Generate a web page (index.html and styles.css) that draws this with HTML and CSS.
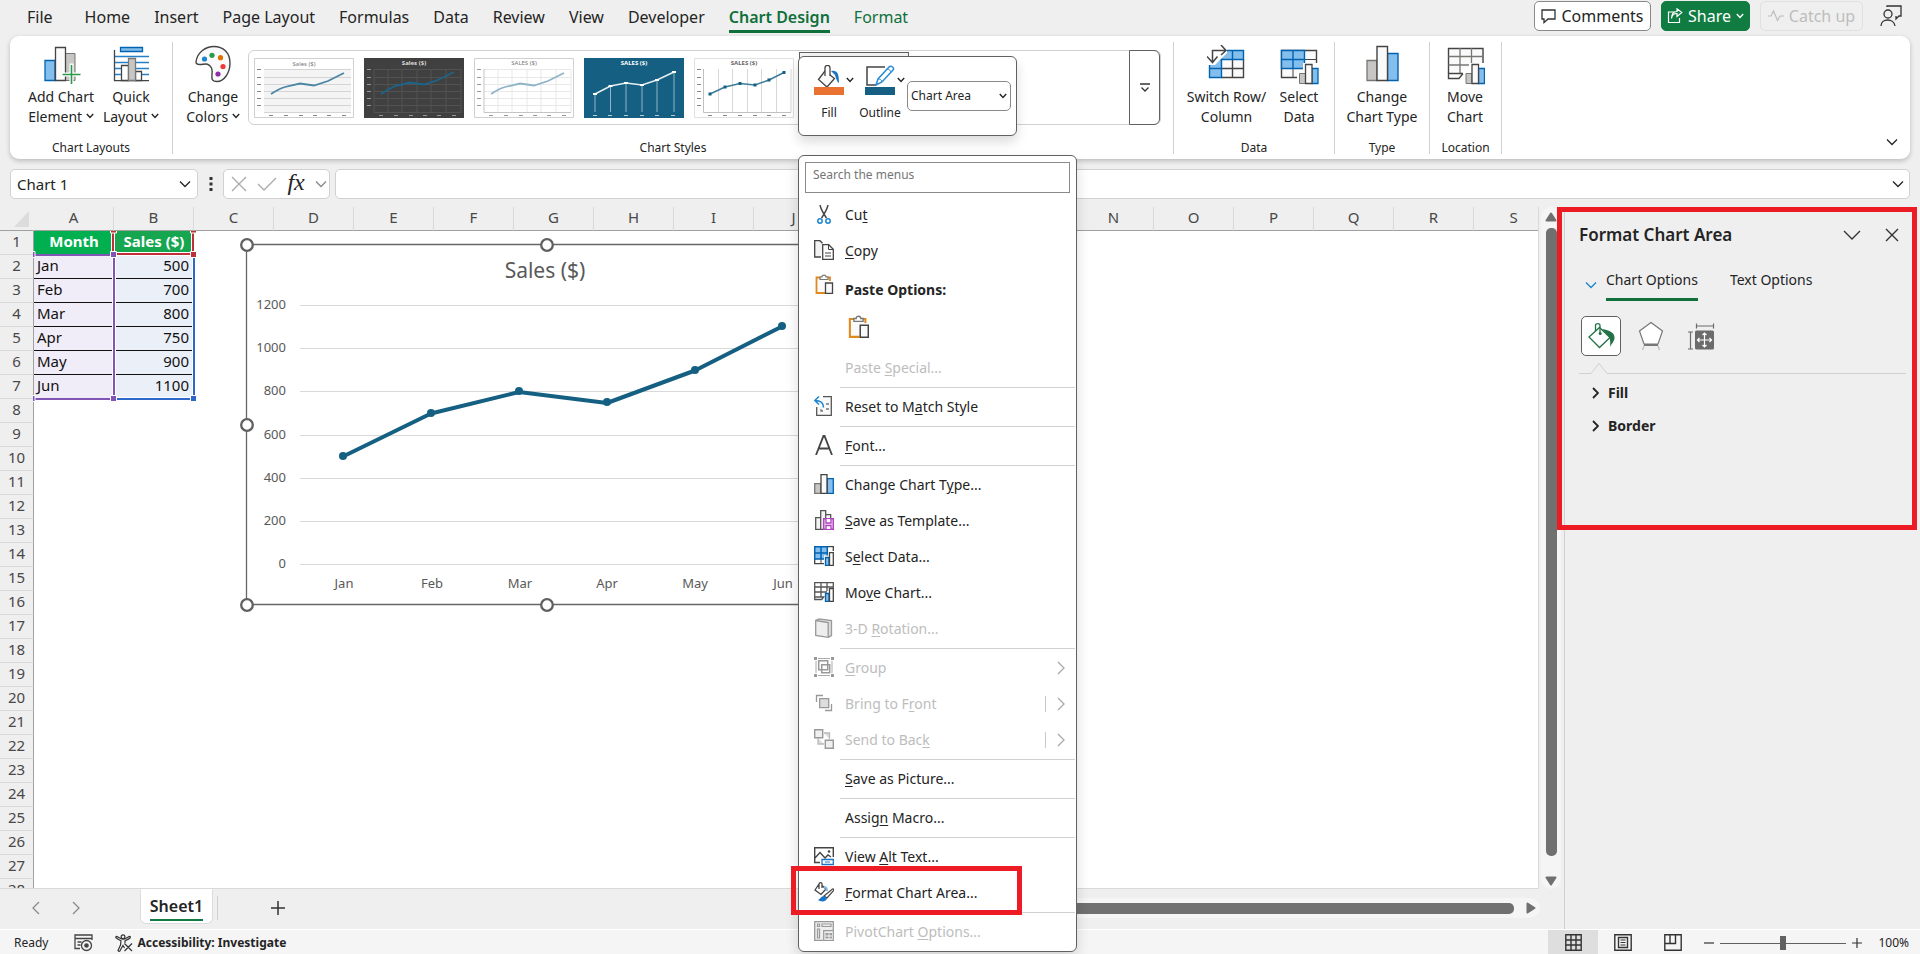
FILE: index.html
```html
<!DOCTYPE html>
<html lang="en">
<head>
<meta charset="utf-8">
<title>Chart Design</title>
<link rel="stylesheet" href="styles.css">
</head>
<body>
<svg class="defs" aria-hidden="true">
  <symbol id="down" viewBox="0 0 12 8"><path d="M1 1.5 6 6.5 11 1.5" fill="none" stroke="currentColor" stroke-width="1.3"/></symbol>
  <symbol id="caret" viewBox="0 0 8 6"><path d="M.8 1 4 4.4 7.2 1" fill="none" stroke="currentColor" stroke-width="1.4"/></symbol>
  <symbol id="right" viewBox="0 0 8 14"><path d="M1 1 7 7 1 13" fill="none" stroke="currentColor" stroke-width="1.3"/></symbol>
  <symbol id="expand" viewBox="0 0 7 12"><path d="M1 1 6 6 1 11" fill="none" stroke="currentColor" stroke-width="1.8"/></symbol>
  <symbol id="left" viewBox="0 0 8 14"><path d="M7 1 1 7 7 13" fill="none" stroke="currentColor" stroke-width="1.3"/></symbol>
  <symbol id="clip" viewBox="0 0 20 20"><path d="M11 19H2.500V3.500H16V7" fill="#fafafa" stroke="#e08a1e" stroke-width="1.8"/><path d="M6 5.500V3h2c0-2.600 4-2.600 4 0h2v2.500Z" fill="#fff" stroke="#777" stroke-width="1.2"/><path d="M11.500 9h7v10.300h-7Z" fill="#fafafa" stroke="#444" stroke-width="1.300"/></symbol>
  <symbol id="minibars" viewBox="0 0 20 20"><path d="M.7 9.700h6v9.600h-6Z" fill="#c8c6c4" stroke="#797774" stroke-width="1.300"/><path d="M13.300 4.700h6v14.600h-6Z" fill="#83beec" stroke="#0063b1" stroke-width="1.300"/><path d="M7 .7h6v18.600H7Z" fill="#fafafa" stroke="#444" stroke-width="1.300"/></symbol>
</svg>

<header class="tabs-bar">
  <nav class="tabs" aria-label="Ribbon tabs">
    <button class="tab tab-file">File</button><button class="tab">Home</button><button class="tab">Insert</button><button class="tab">Page Layout</button><button class="tab">Formulas</button><button class="tab">Data</button><button class="tab">Review</button><button class="tab">View</button><button class="tab">Developer</button><button class="tab active">Chart Design</button><button class="tab contextual">Format</button>
  </nav>
  <div class="top-actions">
    <button class="action comments"><svg width="15" height="16" viewBox="0 0 15 16"><path d="M1 2h13v9H7l-4 3.500V11H1Z" fill="none" stroke="#333" stroke-width="1.300"/></svg>Comments</button>
    <button class="action share"><svg width="16" height="16" viewBox="0 0 16 16"><path d="M7 4H1.500v10.500h11V10M4.500 10.500C5 6.500 7.500 5.500 10 5.500V8.500L14.800 4.500 10 .8V3.500C6.500 3.700 4.500 6 4.500 10.500Z" fill="none" stroke="#fff" stroke-width="1.200"/></svg>Share<svg class="caret" width="8" height="6"><use href="#caret"/></svg></button>
    <button class="action catch" disabled><svg width="16" height="14" viewBox="0 0 16 14"><path d="M0 7h3l2.500-5 4 9.500L12 7h4" fill="none" stroke="currentColor" stroke-width="1.200"/></svg>Catch up</button>
    <button class="person" aria-label="Account"><svg width="22" height="22" viewBox="0 0 22 22"><path d="M7 2V1h14v10h-2l-3 3v-3" fill="none" stroke="#333" stroke-width="1.300"/><circle cx="8" cy="9" r="4" fill="none" stroke="#333" stroke-width="1.300"/><path d="M1 21c0-8 13-8 14 0" fill="none" stroke="#333" stroke-width="1.300"/></svg></button>
  </div>
</header>

<section class="ribbon" aria-label="Chart Design">
  <div class="group g-layouts">
    <div class="group-body">
      <button class="big"><svg width="40" height="40" viewBox="0 0 40 40"><path d="M4 15.500h10v20H4Z" fill="#83beec" stroke="#0063b1" stroke-width="1.300"/><path d="M24.500 8.500H34v27h-9.500Z" fill="#c8c6c4" stroke="#797774"/><path d="M14.500 2.500h10v33h-10Z" fill="#fafafa" stroke="#444" stroke-width="1.300"/><path d="M30.500 18.500v21M20 29.500h21" stroke="#fff" stroke-width="4"/><path d="M30.500 20v19M21.500 29.500h18" stroke="#2b9a48" stroke-width="1.600"/></svg><span>Add Chart<br>Element <svg class="caret" width="8" height="6"><use href="#caret"/></svg></span></button>
      <button class="big"><svg width="40" height="40" viewBox="0 0 40 40"><path d="M9.500 2.500h22v4h-22Z" fill="#83beec" stroke="#0063b1" stroke-width="1.300"/><path d="M4 11.500h34M4 17.500h34M4 23.500h34M4 29.500h34" stroke="#2580c8" stroke-width="1.500"/><path d="M3.500 5v31M3 35.700h35" stroke="#444" stroke-width="1.300"/><path d="M10.500 20.500h7v15h-7ZM24.500 26.500h6v9h-6Z" fill="#fff" stroke="#444" stroke-width="1.300"/><path d="M17.500 13.500h7v22h-7Z" fill="#c8c6c4" stroke="#797774" stroke-width="1.300"/></svg><span>Quick<br>Layout <svg class="caret" width="8" height="6"><use href="#caret"/></svg></span></button>
    </div>
    <div class="group-label">Chart Layouts</div>
  </div>
  <div class="group g-styles">
    <div class="group-body">
      <button class="big"><svg width="40" height="40" viewBox="0 0 40 40"><path d="M3 17C4 7 13 1.500 21 1.500c9 0 16 6 16 16.500 0 10-6 18.500-13 18.500-9 0-3-8-5.500-13.500C15.500 16.500 10 20 7 19.500 4.500 19.500 3 18.500 3 17Z" fill="#fafafa" stroke="#444" stroke-width="1.400"/><circle cx="11.500" cy="14" r="2.600" fill="#1c86d1"/><circle cx="19" cy="10.300" r="2.600" fill="#2b9a48"/><circle cx="27.500" cy="12.700" r="2.600" fill="#e07000"/><circle cx="30" cy="21.500" r="2.600" fill="#f03a3a"/><circle cx="25" cy="29" r="2.600" fill="#8e2fa8"/></svg><span>Change<br>Colors <svg class="caret" width="8" height="6"><use href="#caret"/></svg></span></button>
      <div class="gallery">
        <button class="thumb" aria-label="Style 1"><svg viewBox="0 0 100 60"><path d="M.5.500h99v59H.5Z" fill="#fff" stroke="#d0d0d0"/><path d="M10 11h87v43H10Z" fill="#f4f4f4"/><path d="M10 11.500h87M10 19.500h87M10 26.500h87M10 33.500h87M10 40.500h87M10 47.500h87M10 54.500h87" stroke="#d4d4d4"/><path d="M17 36C20 34 27 30 31 29L46 25.500 60 27.500 74 23 90 15" fill="none" stroke="#4b86a4" stroke-width="1.800"/><text x="50" y="8" text-anchor="middle" fill="#777">Sales ($)</text><path d="M3 11.500h4M3 19.500h4M3 26.500h4M3 33.500h4M3 40.500h4M3 47.500h4M15 57.500h4M30 57.500h4M45 57.500h4M59 57.500h4M73 57.500h4M88 57.500h4" stroke="#888"/></svg></button>
        <button class="thumb" aria-label="Style 2"><svg viewBox="0 0 100 60"><path d="M0 0h100v60H0Z" fill="#404040"/><path d="M10 11.500h87M10 19.500h87M10 26.500h87M10 33.500h87M10 40.500h87M10 47.500h87M10 54.500h87M10 11v43M24 11v43M38 11v43M53 11v43M67 11v43M82 11v43M97 11v43" stroke="#525252"/><path d="M17 36C20 34 27 30 31 28L46 24.500 60 26.500 74 22 90 14" fill="none" stroke="#1b648a" stroke-width="1.800"/><text x="50" y="7" text-anchor="middle" fill="#ddd" class="strong">Sales ($)</text><path d="M3 11.500h4M3 19.500h4M3 26.500h4M3 33.500h4M3 40.500h4M3 47.500h4M15 57.500h4M30 57.500h4M45 57.500h4M59 57.500h4M73 57.500h4M88 57.500h4" stroke="#999"/></svg></button>
        <button class="thumb" aria-label="Style 3"><svg viewBox="0 0 100 60"><path d="M.5.500h99v59H.5Z" fill="#fff" stroke="#d0d0d0"/><path d="M10 11.500h87M10 19.500h87M10 26.500h87M10 33.500h87M10 40.500h87M10 47.500h87M24 11v43M38 11v43M53 11v43M67 11v43M82 11v43M97 11v43" stroke="#e8e8e8"/><path d="M10 11v43.500h87" fill="none" stroke="#c4c4c4"/><path d="M17 36C20 34 27 30 31 29L46 25.500 60 27.500 74 23 90 15" fill="none" stroke="#8fb4c6" stroke-width="1.800"/><text x="50" y="7" text-anchor="middle" fill="#777">SALES ($)</text><path d="M3 11.500h4M3 19.500h4M3 26.500h4M3 33.500h4M3 40.500h4M3 47.500h4M15 57.500h4M30 57.500h4M45 57.500h4M59 57.500h4M73 57.500h4M88 57.500h4" stroke="#999"/></svg></button>
        <button class="thumb" aria-label="Style 4"><svg viewBox="0 0 100 60"><path d="M0 0h100v60H0Z" fill="#156082"/><path d="M11 36v18M26.500 28v26M42 25v29M58 27v27M73 22v32M90 14v40" stroke="#8fb4c6"/><path d="M11 36 26.500 28 42 25 58 27 73 22 90 14" fill="none" stroke="#e4eef2" stroke-width="1.500"/><path d="M9 35h4v2H9ZM24.500 27h4v2h-4ZM40 24h4v2h-4ZM56 26h4v2h-4ZM71 21h4v2h-4ZM88 13h4v2h-4Z" fill="#fff"/><text x="50" y="7" text-anchor="middle" fill="#fff" class="strong">SALES ($)</text><path d="M9 57.500h4M24 57.500h4M40 57.500h4M56 57.500h4M71 57.500h4M87 57.500h4" stroke="#b5ced9"/></svg></button>
        <button class="thumb" aria-label="Style 5"><svg viewBox="0 0 100 60"><path d="M.5.500h99v59H.5Z" fill="#fff" stroke="#e0e0e0"/><path d="M24.500 11v43M38.500 11v43M53.500 11v43M67.500 11v43M82.500 11v43M97 11v43" stroke="#d8d8d8"/><path d="M9.500 11v43.500H97" fill="none" stroke="#c0c0c0"/><path d="M16 36 31 29 46 25.500 61 27 75 22 90 14.500" fill="none" stroke="#3c7c99" stroke-width="1.500"/><path d="M14.500 34.500h3v3h-3ZM29.500 27.500h3v3h-3ZM44.500 24h3v3h-3ZM59.500 25.500h3v3h-3ZM73.500 20.500h3v3h-3ZM88.500 13h3v3h-3Z" fill="#156082"/><text x="50" y="7" text-anchor="middle" fill="#666" class="strong">SALES ($)</text><path d="M3 11.500h4M3 19.500h4M3 26.500h4M3 33.500h4M3 40.500h4M3 47.500h4M14 57.500h4M29 57.500h4M44 57.500h4M59 57.500h4M73 57.500h4M88 57.500h4" stroke="#888"/></svg></button>
        <button class="thumb selected" aria-label="Style 6"></button>
        <button class="more" aria-label="More styles"><svg width="10" height="10" viewBox="0 0 10 10"><path d="M0 1h10M1.500 4.500 5 8l3.500-3.500" fill="none" stroke="#333" stroke-width="1.300"/></svg></button>
      </div>
    </div>
    <div class="group-label">Chart Styles</div>
  </div>
  <div class="group g-data">
    <div class="group-body">
      <button class="big wide"><svg width="40" height="40" viewBox="0 0 40 40"><path d="M14 5.500h23v9H14ZM2.500 14.500h12v18h-12Z" fill="#83beec"/><path d="M14.500 14.500h22v18h-22Z" fill="#fafafa"/><path d="M36.500 14.500v18H14.500M25.500 14.500v18M14.500 23.500h22" fill="none" stroke="#444" stroke-width="1.400"/><path d="M16 5.500h20.500v9H2.500v18h12V9M25.500 5.500v9M2.500 23.500h12" fill="none" stroke="#0063b1" stroke-width="1.400"/><path d="M0 -2h20v10L8 20H-2Z" fill="#fff"/><path d="M5.500 17V5.500H19M14 0l5 5.500L14 10M0 11.500l5.500 6 5-6" fill="none" stroke="#444" stroke-width="1.500"/></svg><span>Switch Row/<br>Column</span></button>
      <button class="big narrow"><svg width="40" height="40" viewBox="0 0 40 40"><path d="M2.500 5.500h35v27h-35Z" fill="#fafafa" stroke="#444" stroke-width="1.400"/><path d="M14 23v10M2 32.500h20M37.500 14.500h-12" stroke="#444"/><path d="M2.500 5.500h23v18h-23Z" fill="#83beec"/><path d="M2.500 5.500h23v18h-23ZM14 5.500v18M2.500 14.500h23" fill="none" stroke="#0063b1" stroke-width="1.400"/><path d="M18 26h6v-8h16v22H18Z" fill="#fff"/><path d="M20.500 28.500h6v10h-6Z" fill="#c8c6c4" stroke="#797774"/><path d="M33 23.500h6v15h-6Z" fill="#83beec" stroke="#0063b1" stroke-width="1.300"/><path d="M26.500 19.500H33v19h-6.500Z" fill="#fafafa" stroke="#444" stroke-width="1.300"/></svg><span>Select<br>Data</span></button>
    </div>
    <div class="group-label">Data</div>
  </div>
  <div class="group g-type">
    <div class="group-body">
      <button class="big wide"><svg width="40" height="40" viewBox="0 0 40 40"><path d="M5 15.500h10v20H5Z" fill="#c8c6c4" stroke="#797774" stroke-width="1.300"/><path d="M25.500 8.500H36v27H25.500Z" fill="#83beec" stroke="#0063b1" stroke-width="1.400"/><path d="M15 1.500h10.500v34H15Z" fill="#fafafa" stroke="#444" stroke-width="1.400"/></svg><span>Change<br>Chart Type</span></button>
    </div>
    <div class="group-label">Type</div>
  </div>
  <div class="group g-loc">
    <div class="group-body">
      <button class="big"><svg width="40" height="40" viewBox="0 0 40 40"><path d="M3.500 28V3.500H38V21" fill="#fafafa" stroke="#444" stroke-width="1.400"/><path d="M15 3v25M26.500 3v15M3.500 11.500H38M3.500 20H26" stroke="#797774" stroke-width="1.300"/><path d="M18 28.500H3.500v5H14l4-5" fill="none" stroke="#444" stroke-width="1.400"/><path d="M19 26h5v-8h16v22H19Z" fill="#fff"/><path d="M21 28.500h6v10h-6Z" fill="#c8c6c4" stroke="#797774"/><path d="M33.500 23.500h6v15h-6Z" fill="#83beec" stroke="#0063b1" stroke-width="1.300"/><path d="M27 19.500h6.500v19H27Z" fill="#fafafa" stroke="#444" stroke-width="1.300"/></svg><span>Move<br>Chart</span></button>
    </div>
    <div class="group-label">Location</div>
  </div>
  <div class="ribbon-end"><button aria-label="Ribbon options"><svg width="12" height="8"><use href="#down"/></svg></button></div>
</section>

<section class="formula-bar">
  <div class="name-box"><input aria-label="Name box" value="Chart 1"><button aria-label="Names"><svg width="12" height="8"><use href="#down"/></svg></button></div>
  <svg class="dots" width="4" height="16" viewBox="0 0 4 16"><path d="M.5 1h3v3h-3ZM.5 6.500h3v3h-3ZM.5 12h3v3h-3Z" fill="#333"/></svg>
  <div class="fx-box">
    <button aria-label="Cancel"><svg width="16" height="16" viewBox="0 0 16 16"><path d="m1 1 14 14M15 1 1 15" stroke="#aaa" stroke-width="1.300"/></svg></button>
    <button aria-label="Enter"><svg width="20" height="16" viewBox="0 0 20 16"><path d="m1 8 6 6L19 2" fill="none" stroke="#aaa" stroke-width="1.300"/></svg></button>
    <button class="fx" aria-label="Insert function">fx</button>
    <button aria-label="Functions"><svg width="12" height="8" class="dim"><use href="#down"/></svg></button>
  </div>
  <div class="formula"><input aria-label="Formula"><button aria-label="Expand"><svg width="12" height="8"><use href="#down"/></svg></button></div>
</section>

<main class="workspace">
  <div class="book">
    <div class="sheet-row">
      <div class="sheet">
        <table class="grid">
          <thead><tr><th class="corner"><svg width="15" height="16" viewBox="0 0 15 16"><path d="M15 0v16H0Z" fill="#dcdcdc"/></svg></th><th>A</th><th>B</th><th>C</th><th>D</th><th>E</th><th>F</th><th>G</th><th>H</th><th>I</th><th>J</th><th>K</th><th>L</th><th>M</th><th>N</th><th>O</th><th>P</th><th>Q</th><th>R</th><th>S</th></tr></thead>
          <tbody>
            <tr class="head"><th>1</th><td>Month</td><td>Sales ($)</td></tr>
            <tr class="data"><th>2</th><td>Jan</td><td>500</td></tr>
            <tr class="data"><th>3</th><td>Feb</td><td>700</td></tr>
            <tr class="data"><th>4</th><td>Mar</td><td>800</td></tr>
            <tr class="data"><th>5</th><td>Apr</td><td>750</td></tr>
            <tr class="data"><th>6</th><td>May</td><td>900</td></tr>
            <tr class="data last"><th>7</th><td>Jun</td><td>1100</td></tr>
            <tr><th>8</th></tr><tr><th>9</th></tr><tr><th>10</th></tr><tr><th>11</th></tr><tr><th>12</th></tr><tr><th>13</th></tr><tr><th>14</th></tr><tr><th>15</th></tr><tr><th>16</th></tr><tr><th>17</th></tr><tr><th>18</th></tr><tr><th>19</th></tr><tr><th>20</th></tr><tr><th>21</th></tr><tr><th>22</th></tr><tr><th>23</th></tr><tr><th>24</th></tr><tr><th>25</th></tr><tr><th>26</th></tr><tr><th>27</th></tr><tr><th>28</th></tr>
          </tbody>
        </table>
        <svg class="ranges" width="166" height="172" viewBox="0 0 166 172" aria-hidden="true">
          <path d="M80 1v22h80V1" fill="none" stroke="#fff" stroke-width="4"/>
          <path d="M80 1v22h80V1" fill="none" stroke="#c0303b" stroke-width="2"/>
          <path d="M0 24h80" stroke="#8055b5" stroke-width="2"/>
          <path d="M0 168h80" stroke="#8055b5" stroke-width="2"/>
          <path d="M81 168h80V26" fill="none" stroke="#fff" stroke-width="4"/><path d="M81 168h80V26" fill="none" stroke="#2f68c8" stroke-width="2"/>
          <path d="M81 24v144" stroke="#fff" stroke-width="4"/><path d="M81 24v144" stroke="#8055b5" stroke-width="2"/>
          <g stroke="#fff"><path d="M77.500-3h6v5h-6ZM157.500-3h6v5h-6ZM157.500 20.500h6v6h-6Z" fill="#c0303b"/><path d="M-4 20.500h6v6h-6ZM77.500 20.500h6v6h-6ZM-4 164.500h6v6h-6ZM77.500 164.500h6v6h-6Z" fill="#8055b5"/><path d="M157.500 164.500h6v6h-6Z" fill="#2f68c8"/></g>
        </svg>
        <svg class="chart" width="620" height="376" viewBox="0 0 620 376" role="img" aria-label="Sales ($) line chart">
          <path d="M8.500 8.500h602v360H8.500Z" fill="#fff" stroke="#666" stroke-width="1.300"/>
          <path d="M62 69.500h528M62 112.500h528M62 155.500h528M62 199.500h528M62 242.500h528M62 285.500h528M62 328.500h528" stroke="#d9d9d9"/>
          <path d="m105 220.500 88-43 88-21.500 88 11 88-32.500 87-44" fill="none" stroke="#156082" stroke-width="4" stroke-linejoin="round"/>
          <g fill="#156082"><circle cx="105" cy="220" r="4"/><circle cx="193" cy="177" r="4"/><circle cx="281" cy="155" r="4"/><circle cx="369" cy="166" r="4"/><circle cx="457" cy="134" r="4"/><circle cx="544" cy="90" r="4"/></g>
          <text class="title" x="307" y="42" text-anchor="middle">Sales ($)</text>
          <g class="axis" text-anchor="end"><text x="48" y="73">1200</text><text x="48" y="116">1000</text><text x="48" y="159">800</text><text x="48" y="203">600</text><text x="48" y="246">400</text><text x="48" y="289">200</text><text x="48" y="332">0</text></g>
          <g class="axis" text-anchor="middle"><text x="106" y="352">Jan</text><text x="194" y="352">Feb</text><text x="282" y="352">Mar</text><text x="369" y="352">Apr</text><text x="457" y="352">May</text><text x="545" y="352">Jun</text></g>
          <g fill="#fff" stroke="#606060" stroke-width="2.300"><circle cx="9" cy="9" r="5.800"/><circle cx="309" cy="9" r="5.800"/><circle cx="610" cy="9" r="5.800"/><circle cx="9" cy="189" r="5.800"/><circle cx="610" cy="189" r="5.800"/><circle cx="9" cy="369" r="5.800"/><circle cx="309" cy="369" r="5.800"/><circle cx="610" cy="369" r="5.800"/></g>
        </svg>
      </div>
      <div class="vscroll"><svg width="12" height="10" viewBox="0 0 12 10"><path d="M6 1.500 10.500 8.500h-9Z" fill="#707070" stroke="#707070" stroke-linejoin="round" stroke-width="2"/></svg><div class="vthumb"></div><svg width="12" height="10" viewBox="0 0 12 10"><path d="M6 8.500 1.500 1.500h9Z" fill="#707070" stroke="#707070" stroke-linejoin="round" stroke-width="2"/></svg></div>
    </div>
    <div class="sheet-tabs">
      <button class="nav-prev" aria-label="Previous sheet"><svg width="8" height="14"><use href="#left"/></svg></button>
      <button class="nav-next" aria-label="Next sheet"><svg width="8" height="14"><use href="#right"/></svg></button>
      <button class="sheet-tab"><span>Sheet1</span></button>
      <i class="tab-sep"></i>
      <button class="add" aria-label="New sheet"><svg width="14" height="14" viewBox="0 0 14 14"><path d="M7 0v14M0 7h14" stroke="#333" stroke-width="1.500"/></svg></button>
      <div class="hscroll"><div class="hthumb"></div><svg width="10" height="12" viewBox="0 0 10 12"><path d="M8.500 6 1.500 10.500v-9Z" fill="#707070" stroke="#707070" stroke-linejoin="round" stroke-width="2"/></svg></div>
    </div>
  </div>
  <aside class="pane">
    <div class="pane-head"><h2>Format Chart Area</h2><button aria-label="Pane options"><svg width="18" height="11" viewBox="0 0 18 11"><path d="m1 1 8 8 8-8" fill="none" stroke="#333" stroke-width="1.300"/></svg></button><button aria-label="Close"><svg width="14" height="14" viewBox="0 0 14 14"><path d="m1 1 12 12M13 1 1 13" stroke="#333" stroke-width="1.400"/></svg></button></div>
    <div class="pane-tabs"><svg class="blue" width="12" height="8"><use href="#down"/></svg><button class="ptab on">Chart Options</button><button class="ptab">Text Options</button></div>
    <div class="pane-icons">
      <button class="picon on" aria-label="Fill and Line"><svg width="28" height="28" viewBox="0 0 28 28"><path d="m12.500 5.500 10.500 10L12.500 25.500 2 15Z" fill="#fff" stroke="#217346" stroke-width="1.300"/><path d="M8.500 9V3.500c0-2.500 4.500-2.500 4.500 0V11" fill="none" stroke="#217346" stroke-width="1.300"/><circle cx="13.200" cy="11.500" r="1.500" fill="#217346"/><path d="M15 7c8 1.500 12 3.500 12.500 8 .3 4-2.500 6-4.500 10 .5-5 .5-8-1.500-11Z" fill="#217346"/></svg></button>
      <button class="picon" aria-label="Effects"><svg width="28" height="30" viewBox="0 0 28 30"><path d="M14 1.500 25.500 10 21 23H7L2.500 10Z" fill="#fff" stroke="#777" stroke-width="1.200"/><path d="M7 23h14v2H7Z" fill="#777"/><path d="m7 25-1.500 4M21 25l1.500 4" stroke="#bbb" stroke-width="1.200"/></svg></button>
      <button class="picon" aria-label="Size and Properties"><svg width="28" height="28" viewBox="0 0 28 28"><rect x="8" y="8.500" width="19" height="19" rx="1.500" fill="#6b6b6b"/><path d="M17.500 11v14M10.500 18h14M15.500 13l2-2 2 2M15.500 23l2 2 2-2M12.500 16l-2 2 2 2M22.500 16l2 2-2 2" fill="none" stroke="#fff" stroke-width="1.200"/><path d="M9.500 1.500v5M26.500 1.500v5M9.500 4h17M1 10h5M1 27h5M3.500 10v17" fill="none" stroke="#6b6b6b" stroke-width="1.200"/></svg></button>
    </div>
    <div class="pane-rule"><svg width="28" height="12" viewBox="0 0 28 12"><path d="M0 11.500h12l8-10 8 10" fill="#efefef" stroke="#d0d0d0"/></svg><i></i></div>
    <button class="section"><svg width="7" height="12"><use href="#expand"/></svg>Fill</button>
    <button class="section"><svg width="7" height="12"><use href="#expand"/></svg>Border</button>
    <div class="highlight pane-highlight"></div>
  </aside>
</main>

<footer class="status">
  <span class="ready">Ready</span>
  <svg class="rec" width="19" height="18" viewBox="0 0 19 18"><path d="M6 14.500H1V1h17v5M1 4.500h17M3.500 8h4M3.500 11h3" fill="none" stroke="#444" stroke-width="1.300"/><circle cx="12.500" cy="11.500" r="5" fill="none" stroke="#444" stroke-width="1.300"/><circle cx="12.500" cy="11.500" r="2.300" fill="#444"/></svg>
  <button class="access"><svg width="18" height="18" viewBox="0 0 18 18"><circle cx="8" cy="2.800" r="1.900" fill="none" stroke="#333" stroke-width="1.200"/><path d="M1 2.500c-.8 1 0 2 5 4.200L5.500 11 3 16.500c.5 1 1.500 1 2 .3L8 11.500l1.500 2.500M10 9V6.700c5-2 6-3.200 5-4.200-1.200-.6-4 2.700-7 2.700S2.500 2 1 2.500M9.500 9.500l7.500 7.500M17 9.500 9.500 17" fill="none" stroke="#333" stroke-width="1.200"/></svg>Accessibility: Investigate</button>
  <div class="views">
    <button class="view on" aria-label="Normal"><svg width="17" height="17" viewBox="0 0 17 17"><path d="M.8.800h15.400v15.400H.8ZM6 1v15M11 1v15M1 6h15M1 11h15" fill="none" stroke="#333" stroke-width="1.400"/></svg></button>
    <button class="view" aria-label="Page Layout"><svg width="18" height="17" viewBox="0 0 18 17"><path d="M.8.800h16.400v15.400H.8ZM4.500 3.500h9v10h-9Z" fill="none" stroke="#333" stroke-width="1.400"/><path d="M6.500 6h5M6.500 8.500h5M6.500 11h5" stroke="#333"/></svg></button>
    <button class="view" aria-label="Page Break"><svg width="18" height="17" viewBox="0 0 18 17"><path d="M.8.800h16.400v15.400H.8ZM1 9.500h10.500V1M6 1v8" fill="none" stroke="#333" stroke-width="1.400"/></svg></button>
  </div>
  <button class="zoom-btn" aria-label="Zoom out"><svg width="10" height="10" viewBox="0 0 10 10"><path d="M0 5h10" stroke="#333" stroke-width="1.200"/></svg></button>
  <input class="zoom" type="range" min="0" max="100" value="50" aria-label="Zoom">
  <button class="zoom-btn" aria-label="Zoom in"><svg width="10" height="10" viewBox="0 0 10 10"><path d="M0 5h10M5 0v10" stroke="#333" stroke-width="1.200"/></svg></button>
  <span class="percent">100%</span>
</footer>

<div class="mini-toolbar">
  <button class="mini"><span class="mini-top"><svg width="30" height="30" viewBox="0 0 30 30"><path d="m11 6-6.500 8.500 8.500 7.500 7.500-8.500Z" fill="#fafafa" stroke="#444" stroke-width="1.300"/><path d="M11 11V3c0-3.500 5-3.500 5 0v8" fill="#fff" stroke="#444" stroke-width="1.300"/><path d="M17 6c6-1 8 2 8 12-2-1-3-5-4-8Z" fill="#1c74c4"/><path d="M0 22h30v8H0Z" fill="#e97132"/></svg><svg class="caret" width="8" height="6"><use href="#caret"/></svg></span><span class="mini-label">Fill</span></button>
  <button class="mini"><span class="mini-top"><svg width="30" height="30" viewBox="0 0 30 30"><path d="M20 2H2v18h9" fill="none" stroke="#444" stroke-width="1.500"/><path d="m11 20 2-6L24 2c2-2 6 1 4 3L17 17Z" fill="#fff" stroke="#2a8ad4" stroke-width="1.500"/><path d="M13 14c2 0 4 1 4 3M22 4c2 0 4 2 4 3" fill="none" stroke="#2a8ad4"/><path d="M0 22h30v8H0Z" fill="#156082"/></svg><svg class="caret" width="8" height="6"><use href="#caret"/></svg></span><span class="mini-label">Outline</span></button>
  <div class="combo"><select aria-label="Chart element"><option>Chart Area</option></select><svg class="caret" width="8" height="6"><use href="#caret"/></svg></div>
</div>

<div class="menu" role="menu">
  <input class="search" type="text" placeholder="Search the menus" aria-label="Search the menus">
  <button class="item"><svg width="20" height="20" viewBox="0 0 20 20"><path d="M6 1c1 5 3 8 6.500 13M14 1c-1 5-3 8-6.500 13" fill="none" stroke="#444" stroke-width="1.400"/><circle cx="6" cy="17" r="2.200" fill="none" stroke="#1c86d1" stroke-width="1.500"/><circle cx="14" cy="17" r="2.200" fill="none" stroke="#1c86d1" stroke-width="1.500"/></svg><span>Cu<u>t</u></span></button>
  <button class="item"><svg width="20" height="20" viewBox="0 0 20 20"><path d="M7 17H.7V.700H6l2.500 2.500" fill="#f2f2f2" stroke="#444" stroke-width="1.300"/><path d="M8.700 4.700h6l4.600 4.600v10H8.700Z" fill="#fff" stroke="#444" stroke-width="1.300"/><path d="M14.500 5v4.500H19M11 13h6M11 16h6" fill="none" stroke="#444"/></svg><span><u>C</u>opy</span></button>
  <div class="item paste-label"><svg width="20" height="20"><use href="#clip"/></svg><strong>Paste Options:</strong></div>
  <div class="paste-row"><button aria-label="Paste"><svg width="23" height="23"><use href="#clip"/></svg></button></div>
  <button class="item" disabled><i class="no-icon"></i><span>Paste <u>S</u>pecial...</span></button>
  <hr>
  <button class="item"><svg width="20" height="20" viewBox="0 0 20 20"><path d="M9 .7h8.300v18.600H2.700V11" fill="#fafafa" stroke="#555" stroke-width="1.300"/><path d="M12 8h3M12 13h3M7 13v2h2" stroke="#777" fill="none" stroke-width="1.300"/><path d="M5 .5.800 4.500 5 8.500M1 4.500c5 0 8.500 1.500 8.500 7" fill="none" stroke="#1c86d1" stroke-width="1.500"/></svg><span>Reset to M<u>a</u>tch Style</span></button>
  <hr>
  <button class="item"><svg width="20" height="20" viewBox="0 0 20 20"><path d="M2 20 9.500.800h1L18 20M4.700 13.500h10.600" fill="none" stroke="#444" stroke-width="1.800"/></svg><span><u>F</u>ont...</span></button>
  <hr>
  <button class="item"><svg width="20" height="20"><use href="#minibars"/></svg><span>Change Chart T<u>y</u>pe...</span></button>
  <button class="item"><svg width="20" height="20" viewBox="0 0 20 20"><path d="M1.700 7.700h5v11.600h-5ZM6.700.700h5v18.600h-5ZM11.700 4.700h5V9" fill="#f4f4f4" stroke="#555" stroke-width="1.300"/><path d="M9.700 8.700h9.600v10.600H9.700Z" fill="#f3d9f5" stroke="#b144c0" stroke-width="1.500"/><path d="M12 9v4h5V9M12 19v-3.500h5V19" fill="#fff" stroke="#b144c0" stroke-width="1.300"/></svg><span><u>S</u>ave as Template...</span></button>
  <button class="item"><svg width="20" height="20" viewBox="0 0 20 20"><path d="M.7.700h18.600v17H.7Z" fill="#fff" stroke="#444" stroke-width="1.300"/><path d="M.7.700h12.600V13H.7Z" fill="#83beec"/><path d="M.7.700h12.600V13H.7ZM7 1v12M1 7h12" fill="none" stroke="#0063b1" stroke-width="1.500"/><path d="M7 13v5" stroke="#444"/><path d="M10 20V9.500h4V5h6v15Z" fill="#fff"/><path d="M11.500 11.500h3.500v8h-3.500Z" fill="#83beec" stroke="#0063b1" stroke-width="1.300"/><path d="M15.500 6.700h3.800v12.600h-3.800Z" fill="#fff" stroke="#444" stroke-width="1.300"/></svg><span>S<u>e</u>lect Data...</span></button>
  <button class="item"><svg width="20" height="20" viewBox="0 0 20 20"><path d="M.7 15V.700h18.600V6M.7 5h18M.7 10H13M7 1v14M13 1v8M.7 15h9l-2 2.500h-7Z" fill="none" stroke="#555" stroke-width="1.300"/><path d="M11.500 11.500h3.500v8h-3.500Z" fill="#83beec" stroke="#0063b1" stroke-width="1.300"/><path d="M15.500 6.700h3.800v12.600h-3.800Z" fill="#fff" stroke="#444" stroke-width="1.300"/></svg><span>Mo<u>v</u>e Chart...</span></button>
  <button class="item" disabled><svg width="20" height="20" viewBox="0 0 20 20"><path d="M1.700 2.500 5 .800l12.500 1.700v15L14 19.300" fill="#ddd" stroke="#999" stroke-width="1.300"/><path d="m1.700 2.500 12.500 2v14.800L1.700 17.500Z" fill="#eee" stroke="#999" stroke-width="1.300"/></svg><span>3-D <u>R</u>otation...</span></button>
  <hr>
  <button class="item" disabled><svg width="20" height="20" viewBox="0 0 20 20"><path d="M0 0h3v3H0ZM17 0h3v3h-3ZM0 17h3v3H0ZM17 17h3v3h-3Z" fill="#999"/><path d="M2 4v12M4 1.500h12M18 4v12M4 18.500h12" stroke="#aaa"/><path d="M4.700 3.700h9v9h-9ZM7.700 7.700h8v8h-8Z" fill="none" stroke="#999" stroke-width="1.500"/></svg><span><u>G</u>roup</span><svg class="sub" width="8" height="14"><use href="#right"/></svg></button>
  <button class="item" disabled><svg width="20" height="20" viewBox="0 0 20 20"><path d="M9 2.500H2.500V9M11 17.500h6.500V11" fill="none" stroke="#999" stroke-width="1.300"/><path d="M5.700 5.700h9v9h-9Z" fill="#ddd" stroke="#999" stroke-width="1.300"/></svg><span>Bring to F<u>r</u>ont</span><i class="split"></i><svg class="sub" width="8" height="14"><use href="#right"/></svg></button>
  <button class="item" disabled><svg width="20" height="20" viewBox="0 0 20 20"><path d="M4 9v6h6M10 4h5.500v6" fill="#ddd" stroke="#bbb" stroke-width="1.300"/><path d="M.7.700h8v8h-8ZM11.300 11.300h8v8h-8Z" fill="#f0f0f0" stroke="#999" stroke-width="1.400"/></svg><span>Send to Bac<u>k</u></span><i class="split"></i><svg class="sub" width="8" height="14"><use href="#right"/></svg></button>
  <hr>
  <button class="item"><i class="no-icon"></i><span><u>S</u>ave as Picture...</span></button>
  <hr>
  <button class="item"><i class="no-icon"></i><span>Assig<u>n</u> Macro...</span></button>
  <hr>
  <button class="item"><svg width="20" height="20" viewBox="0 0 20 20"><path d="M6 16.500H.7V1.700h18.600V11M1 12l5-5.500 5 5.500 3-3 3 2" fill="none" stroke="#444" stroke-width="1.400"/><circle cx="15" cy="5.500" r="1.300" fill="#444"/><path d="M8 13.500h11.300v5H8Z" fill="#fff" stroke="#1c74c4" stroke-width="1.300"/><path d="M11 16h5" stroke="#1c74c4"/></svg><span>View <u>A</u>lt Text...</span></button>
  <button class="item"><svg width="20" height="20" viewBox="0 0 20 20"><path d="M5 2 1 8l6 4.500 5-5.500L7.500 3M5 7V2c0-1.800 3-1.800 3 0v4" fill="#fff" stroke="#444" stroke-width="1.300"/><path d="M10 5c2 0 3 1 3 4" fill="none" stroke="#83beec" stroke-width="2"/><path d="m10 14 8.500-7c1.500-.5 1.500 1 .8 1.800L13 16Z" fill="#fff" stroke="#444" stroke-width="1.200"/><path d="M10 14c-3 0-3.500 3-6 4 3 2.500 9 1.500 9-2Z" fill="#1c74c4"/></svg><span><u>F</u>ormat Chart Area...</span></button>
  <hr>
  <button class="item" disabled><svg width="20" height="20" viewBox="0 0 20 20"><path d="M9 19.300H.7V.700h18.600V9" fill="#eee" stroke="#999" stroke-width="1.300"/><path d="M3.500 3h2v2.500h-2ZM8 3h9v2.500H8ZM3.500 8h2v9h-2ZM9.700 9.700h9.600v9.600H9.700ZM12 12.500h2v1.500h-2ZM16 12.500h1.500v1.500H16ZM12 16h2v1h-2ZM16 16h1.500v1H16Z" fill="none" stroke="#999" stroke-width="1.200"/></svg><span>PivotChart <u>O</u>ptions...</span></button>
</div>
<div class="highlight menu-highlight"></div>
</body>
</html>
```
FILE: styles.css
```css
* { box-sizing: border-box; }
body {
  margin: 0;
  height: 100vh;
  display: flex;
  flex-direction: column;
  overflow: hidden;
  background: #efefef;
  color: #242424;
  font: 14px/20px "Noto Sans", "Open Sans", sans-serif;
}
button, input, select { font: inherit; color: inherit; border: 0; background: none; padding: 0; margin: 0; }
button { white-space: nowrap; }
input, select { outline: 0; min-width: 0; }
svg { display: block; flex: none; }
.defs { position: absolute; width: 0; height: 0; }

/* tabs */
.tabs-bar { display: flex; justify-content: space-between; height: 36px; flex: none; }
.tabs { display: flex; gap: 24px; padding-left: 27px; font-size: 16px; }
.tab { height: 33px; border-bottom: 3px solid transparent; border-top: 3px solid transparent; }
.tab-file { margin-right: 8px; }
.tab.active { color: #0f703b; font-weight: 600; border-bottom-color: #0f703b; }
.tab.contextual { color: #0f703b; }
.top-actions { display: flex; align-items: center; gap: 10px; height: 32px; padding-right: 18px; font-size: 16px; }
.action { display: flex; align-items: center; justify-content: center; gap: 5px; height: 30px; border-radius: 5px; border: 1px solid #8a8a8a; background: #fff; }
.comments { width: 117px; }
.share { width: 89px; background: #107c41; border-color: #107c41; color: #fff; }
.catch { width: 103px; background: none; border-color: #e0e0e0; color: #bdbdbd; }
.person { margin-left: 7px; }

/* ribbon */
.ribbon { display: flex; flex: none; height: 123px; margin: 0 10px; padding: 6px 0 5px; background: #fff; border-radius: 9px; box-shadow: 0 2px 5px rgba(0, 0, 0, .22); }
.group { display: flex; flex-direction: column; justify-content: space-between; border-right: 1px solid #d1d1d1; }
.group-body { display: flex; }
.group-label { text-align: center; font-size: 12px; line-height: 12px; }
.g-layouts { width: 163px; }
.g-layouts .group-body { padding-left: 16px; }
.g-styles { flex: 1; min-width: 0; }
.g-styles .group-body { padding: 0 12px 0 5px; }
.g-data { width: 161px; }
.g-type { width: 95px; }
.g-loc { width: 72px; }
.ribbon-end { width: 408px; display: flex; justify-content: flex-end; align-items: flex-end; padding: 0 12px 8px; }
.big { width: 70px; padding-top: 3px; display: flex; flex-direction: column; align-items: center; gap: 2px; }
.big.wide { width: 94px; }
.g-data .wide { width: 105px; }
.big.narrow { width: 40px; }
.big .caret { display: inline-block; vertical-align: 3px; }
.gallery { flex: 1; min-width: 0; margin-top: 8px; height: 75px; padding-left: 5px; display: flex; align-items: center; gap: 10px; border: 1px solid #d1d1d1; border-radius: 6px; }
.thumb { width: 100px; height: 60px; }
.thumb svg { width: 100px; height: 60px; }
.thumb text { font-size: 6px; }
.thumb .strong { font-weight: 700; }
.thumb.selected { width: 110px; height: 72px; margin-left: -5px; border: 1px solid #616161; background: #f4f4f4; }
.more { margin-left: auto; width: 31px; height: 75px; flex: none; border: 1px solid #616161; border-radius: 0 6px 6px 0; display: flex; align-items: center; justify-content: center; }

/* formula bar */
.formula-bar { display: flex; align-items: center; flex: none; height: 30px; margin: 10px 10px 8px; font-size: 15px; }
.name-box, .fx-box, .formula { display: flex; align-items: center; height: 30px; background: #fff; border: 1px solid #d1d1d1; border-radius: 5px; }
.name-box { width: 188px; padding: 0 6px; }
.name-box input, .formula input { flex: 1; }
.dots { margin: 0 10px 0 11px; }
.fx-box { width: 107px; padding: 0 2px 0 7px; justify-content: space-between; }
.fx { font: italic 24px/24px "Liberation Serif", serif; margin-top: -4px; }
.dim { color: #888; }
.formula { flex: 1; margin-left: 5px; padding: 0 5px; }

/* workspace */
.workspace { flex: 1; min-height: 0; display: flex; }
.book { flex: 1; min-width: 0; display: flex; flex-direction: column; }
.sheet-row { flex: 1; min-height: 0; display: flex; gap: 2px; padding-right: 3px; }
.sheet { position: relative; flex: 1; min-width: 0; overflow: hidden; background: #fff; border-right: 1px solid #d9d9d9; border-bottom: 1px solid #d9d9d9; }
.grid { table-layout: fixed; width: 1554px; border-collapse: separate; border-spacing: 0; font-size: 15px; line-height: 21px; }
.grid th { padding: 0; font-weight: 400; color: #484848; background: #efefef; vertical-align: top; }
.grid thead th { width: 80px; height: 24px; border-right: 1px solid #d9d9d9; border-bottom: 1px solid #a0a0a0; }
.grid thead .corner { width: 34px; border-right-color: #efefef; }
.corner svg { margin: 4px 0 0 14px; }
.grid tbody th { height: 24px; border-right: 1px solid #a0a0a0; border-bottom: 1px solid #d9d9d9; }
.grid td { padding: 0 3px; color: #111; border-bottom: 1px solid #111; vertical-align: top; }
.grid .head td { background: #16a650; color: #fff; font-weight: 700; text-align: center; border-bottom: 0; }
.grid .head td:nth-child(2) { background: #00b050; }
.grid .data td:nth-child(2) { background: #f1edf8; }
.grid .data td:nth-child(3) { background: #eaeff8; text-align: right; padding-right: 5px; }
.grid .last td { border-bottom: 0; }
.ranges { position: absolute; left: 33px; top: 24px; }
.chart { position: absolute; left: 238px; top: 29px; }
.chart .title { font-size: 21px; fill: #595959; }
.chart .axis { font-size: 13px; fill: #595959; }
.vscroll { width: 20px; display: flex; flex-direction: column; align-items: center; gap: 6px; padding: 5px 0 3px; background: #f5f5f5; border-radius: 10px; }
.vthumb { width: 11px; flex: 1; margin-bottom: 14px; background: #707070; border-radius: 5px; }

.sheet-tabs { flex: none; display: flex; align-items: center; height: 40px; padding: 0 24px 2px 0; }
.nav-prev { margin-left: 32px; color: #8a8a8a; }
.nav-next { margin: 0 60px 0 32px; color: #8a8a8a; }
.sheet-tab { align-self: flex-start; width: 73px; height: 35px; background: #fff; border: 1px solid #dcdcdc; border-top-color: #fff; border-radius: 0 0 6px 6px; font-size: 16px; font-weight: 600; }
.sheet-tab span { display: inline-block; height: 28px; line-height: 26px; border-bottom: 2px solid #107c41; }
.tab-sep { width: 1px; height: 24px; margin-left: 4px; background: #cfcfcf; }
.add { margin-left: 53px; }
.hscroll { margin-left: auto; width: 660px; height: 20px; padding: 0 4px 0 5px; display: flex; align-items: center; gap: 12px; background: #f5f5f5; border-radius: 10px; }
.hthumb { flex: 1; height: 11px; background: #707070; border-radius: 5px; }

/* pane */
.pane { position: relative; width: 356px; flex: none; border-left: 1px solid #cfcfcf; padding: 16px 14px 0; }
.pane-head { display: flex; align-items: center; height: 24px; padding-right: 7px; }
.pane-head h2 { flex: 1; margin: 0; font-size: 17px; font-weight: 600; line-height: 24px; }
.pane-head button + button { margin-left: 24px; }
.pane-tabs { display: flex; align-items: center; height: 32px; margin-top: 22px; padding-left: 6px; }
.blue { color: #1c86d1; margin-right: 9px; }
.ptab { height: 32px; padding-bottom: 8px; border-bottom: 3px solid transparent; margin-right: 32px; }
.ptab.on { border-bottom-color: #0f703b; }
.pane-icons { display: flex; gap: 10px; margin: 15px 0 6px 2px; }
.picon { width: 40px; height: 40px; display: flex; align-items: center; justify-content: center; border: 1px solid transparent; border-radius: 5px; }
.picon.on { background: #fff; border-color: #616161; }
.pane-rule { display: flex; align-items: flex-end; height: 12px; }
.pane-rule i { flex: 1; height: 1px; background: #d0d0d0; }
.section { display: flex; align-items: center; gap: 9px; height: 20px; margin: 9px 0 13px 13px; font-weight: 700; }
.highlight { position: absolute; border: 5px solid #ed1c24; pointer-events: none; }
.pane-highlight { left: -8px; right: 3px; top: 0; height: 323px; }

/* status */
.status { flex: none; display: flex; align-items: center; height: 25px; padding: 2px 11px 0 14px; background: #f5f5f5; border-top: 1px solid #fff; font-size: 12px; line-height: 20px; }
.rec { margin: 0 22px 0 26px; }
.access { display: flex; align-items: center; gap: 4px; font-weight: 700; }
.views { margin-left: auto; display: flex; align-self: stretch; margin-top: -2px; }
.view { width: 50px; display: flex; align-items: center; justify-content: center; }
.view.on { background: #dedede; }
.zoom-btn { margin: 0 6px; }
.zoom { appearance: none; width: 126px; height: 14px; background: linear-gradient(#616161, #616161) center / 100% 1px no-repeat; }
.zoom::-webkit-slider-thumb { appearance: none; width: 6px; height: 14px; background: #616161; }
.percent { margin-left: 10px; }

/* floating layers */
.mini-toolbar { position: absolute; left: 798px; top: 56px; width: 219px; height: 80px; padding: 8px 5px 0 15px; display: flex; background: #fff; border: 1px solid #616161; border-radius: 6px; box-shadow: 0 6px 12px rgba(0, 0, 0, .14); font-size: 12px; }
.mini { display: flex; flex-direction: column; align-items: flex-start; gap: 8px; height: 60px; width: 51px; }
.mini + .mini { width: 42px; }
.mini-top { display: flex; align-items: center; gap: 2px; }
.mini-label { width: 30px; display: flex; justify-content: center; }
.combo { display: flex; align-items: center; width: 104px; height: 30px; margin-top: 16px; padding: 0 3px; border: 1px solid #8a8a8a; border-radius: 5px; }
.combo select { appearance: none; flex: 1; }
.menu { position: absolute; left: 798px; top: 155px; width: 279px; padding: 6px 1px 1px 6px; background: #fff; border: 1px solid #616161; border-radius: 6px; box-shadow: 0 6px 14px rgba(0, 0, 0, .14); display: flex; flex-direction: column; }
.search { height: 31px; margin: 0 5px 4px 0; padding: 0 8px 6px 7px; border: 1px solid #8a8a8a; font-size: 12px; }
.search::placeholder { color: #757575; }
.item { display: flex; align-items: center; gap: 11px; height: 36px; padding: 0 10px 1px 9px; text-align: left; color: #242424; }
.item > svg:first-child { margin-top: -2px; }
.item:disabled { color: #bdbdbd; }
.item u { text-underline-offset: 2px; }
.no-icon { width: 20px; }
.item.paste-label { height: 42px; }
.item.paste-label > svg:first-child { margin-top: -11px; }
.paste-row { height: 39px; padding: 4px 0 0 42px; }
.menu hr { width: 235px; margin: 1px 0 1px auto; border: 0; border-top: 1px solid #d1d1d1; }
.sub { margin-left: auto; color: #aaa; }
.split { width: 1px; height: 16px; margin-left: auto; background: #c8c8c8; }
.split + .sub { margin-left: 0; }
.menu-highlight { left: 791px; top: 866px; width: 231px; height: 49px; }
```
